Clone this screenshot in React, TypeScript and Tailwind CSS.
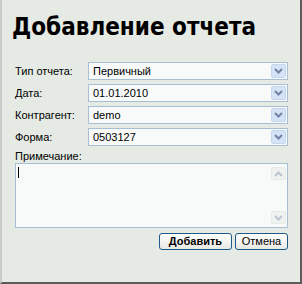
import React from "react";

const fields = [
  { label: "Тип отчета:", value: "Первичный" },
  { label: "Дата:", value: "01.01.2010" },
  { label: "Контрагент:", value: "demo" },
  { label: "Форма:", value: "0503127" },
];

function Chevron({ up = false, faded = false }: { up?: boolean; faded?: boolean }) {
  return (
    <svg width="9" height="6" viewBox="0 0 9 6" className={faded ? "opacity-40" : ""}>
      <path
        d={up ? "M1 5 L4.5 1.5 L8 5" : "M1 1 L4.5 4.5 L8 1"}
        fill="none"
        stroke="#6f83a3"
        strokeWidth="2"
      />
    </svg>
  );
}

function SelectBox({ value }: { value: string }) {
  return (
    <div className="flex h-[18px] w-[200px] items-center justify-between border border-[#a7bfd2] bg-[#f8fafa] pl-[4px] pr-[1px]">
      <span className="text-[11px] leading-none text-black">{value}</span>
      <div className="flex h-[14px] w-[15px] items-center justify-center rounded-[2px] border border-[#c6d6ef] bg-[#d6e2f6]">
        <Chevron />
      </div>
    </div>
  );
}

export default function App() {
  return (
    <div
      className="h-[284px] w-[302px] border-b-2 border-l-2 border-r-2 border-b-[#5c5c5c] border-l-[#c9ccc9] border-r-[#5c5c5c] bg-[#e5eae4] text-black"
      style={{ fontFamily: '"Liberation Sans", Arial, sans-serif' }}
    >
      <h1
        className="pl-[10px] pt-[13px] text-[24px] font-bold leading-[28px] text-black"
        style={{ fontFamily: '"DejaVu Sans Condensed", "DejaVu Sans", Verdana, sans-serif' }}
      >
        Добавление отчета
      </h1>

      <div className="mt-[21px] flex flex-col gap-[4px] pl-[13px]">
        {fields.map((f) => (
          <div key={f.label} className="flex items-center">
            <span className="w-[73px] text-[11px] leading-none">{f.label}</span>
            <SelectBox value={f.value} />
          </div>
        ))}
      </div>

      <div className="mt-[5px] pl-[13px]">
        <div className="text-[11px] leading-[11px]">Примечание:</div>
        <div className="mt-[1px] flex h-[65px] w-[273px] justify-between border border-[#a7bfd2] bg-[#f8fafa] pl-[2px] pr-[1px]">
          <div className="mt-[3px] h-[11px] w-px bg-black" />
          <div className="flex flex-col justify-between py-[3px]">
            <div className="flex h-[13px] w-[15px] items-center justify-center rounded-[2px] border border-[#e6ebe6] bg-[#eff2ef]">
              <Chevron up faded />
            </div>
            <div className="flex h-[13px] w-[15px] items-center justify-center rounded-[2px] border border-[#e6ebe6] bg-[#eff2ef]">
              <Chevron faded />
            </div>
          </div>
        </div>
      </div>

      <div className="mt-[5px] flex justify-end gap-[3px] pr-[12px]">
        <button className="h-[17px] w-[73px] rounded-[3px] border border-[#1d5a8a] bg-gradient-to-b from-white to-[#e8e8e4] text-[11px] font-bold leading-none">
          Добавить
        </button>
        <button className="h-[17px] w-[53px] rounded-[3px] border border-[#1d5a8a] bg-gradient-to-b from-white to-[#e8e8e4] text-[11px] leading-none">
          Отмена
        </button>
      </div>
    </div>
  );
}
